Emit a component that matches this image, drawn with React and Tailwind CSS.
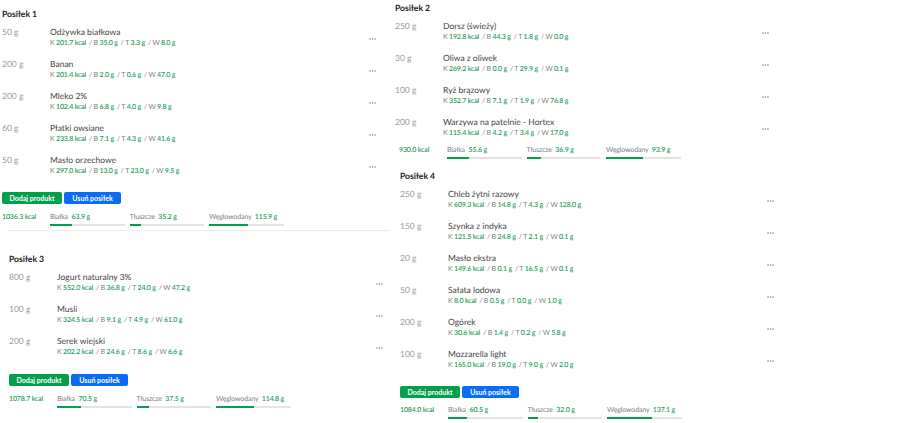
import React from 'react';

const meals = {
  one: {
    title: 'Posiłek 1',
    items: [
      ['50 g', 'Odżywka białkowa', '201.7', '35.0', '3.3', '8.0'],
      ['200 g', 'Banan', '201.4', '2.0', '0.6', '47.0'],
      ['200 g', 'Mleko 2%', '102.4', '6.8', '4.0', '9.8'],
      ['60 g', 'Płatki owsiane', '233.8', '7.1', '4.3', '41.6'],
      ['50 g', 'Masło orzechowe', '297.0', '13.0', '23.0', '9.5'],
    ],
    kcal: '1036.3',
    stats: [['Białka', '63.9', 30], ['Tłuszcze', '35.2', 16], ['Węglowodany', '115.9', 53]],
  },
  two: {
    title: 'Posiłek 2',
    items: [
      ['250 g', 'Dorsz (świeży)', '192.8', '44.3', '1.8', '0.0'],
      ['30 g', 'Oliwa z oliwek', '269.2', '0.0', '29.9', '0.1'],
      ['100 g', 'Ryż brązowy', '352.7', '7.1', '1.9', '76.8'],
      ['200 g', 'Warzywa na patelnie - Hortex', '115.4', '4.2', '3.4', '17.0'],
    ],
    kcal: '930.0',
    stats: [['Białka', '55.6', 30], ['Tłuszcze', '36.9', 19], ['Węglowodany', '93.9', 50]],
  },
  three: {
    title: 'Posiłek 3',
    items: [
      ['800 g', 'Jogurt naturalny 3%', '552.0', '36.8', '24.0', '47.2'],
      ['100 g', 'Musli', '324.5', '9.1', '4.9', '61.0'],
      ['200 g', 'Serek wiejski', '202.2', '24.6', '8.6', '6.6'],
    ],
    kcal: '1078.7',
    stats: [['Białka', '70.5', 32], ['Tłuszcze', '37.5', 17], ['Węglowodany', '114.8', 51]],
  },
  four: {
    title: 'Posiłek 4',
    items: [
      ['250 g', 'Chleb żytni razowy', '609.3', '14.8', '4.3', '128.0'],
      ['150 g', 'Szynka z indyka', '121.5', '24.8', '2.1', '0.1'],
      ['20 g', 'Masło ekstra', '149.6', '0.1', '16.5', '0.1'],
      ['50 g', 'Sałata lodowa', '8.0', '0.5', '0.0', '1.0'],
      ['200 g', 'Ogórek', '30.6', '1.4', '0.2', '5.8'],
      ['100 g', 'Mozzarella light', '165.0', '19.0', '9.0', '2.0'],
    ],
    kcal: '1084.0',
    stats: [['Białka', '60.5', 26], ['Tłuszcze', '32.0', 14], ['Węglowodany', '137.1', 60]],
  },
};

function Macro({ label, value, unit, first }) {
  return (
    <>
      <span className={first ? '' : 'ml-[3px]'}>{first ? label : `/ ${label}`} </span>
      <span className="font-semibold text-[#2a9d60]">{value} {unit}</span>
    </>
  );
}

function Item({ item }) {
  const [amount, name, k, b, t, w] = item;
  return (
    <div className="flex h-8 w-[374px] items-start">
      <div className="w-12 text-[8.5px] leading-3 text-[#999999]">{amount}</div>
      <div className="flex-1">
        <div className="text-[8.5px] leading-3 text-[#444444]">{name}</div>
        <div className="text-[7px] leading-[10px] tracking-[-0.18px] whitespace-nowrap text-[#808080]">
          <Macro label="K" value={k} unit="kcal" first />
          <Macro label="B" value={b} unit="g" />
          <Macro label="T" value={t} unit="g" />
          <Macro label="W" value={w} unit="g" />
        </div>
      </div>
      <svg width="7" height="2" viewBox="0 0 7 2" className="mt-3 fill-[#888888]">
        <circle cx="1" cy="1" r="0.8" />
        <circle cx="3.5" cy="1" r="0.8" />
        <circle cx="6" cy="1" r="0.8" />
      </svg>
    </div>
  );
}

function Stats({ meal, className }) {
  return (
    <div className={`flex items-start tracking-[-0.15px] whitespace-nowrap ${className}`}>
      <div className="w-12 text-[7px] leading-[11px] font-semibold text-[#2a9d60]">{meal.kcal} kcal</div>
      <div className="flex gap-[5px]">
        {meal.stats.map(([label, value, pct]) => (
          <div key={label} className="w-[74.5px]">
            <div className="text-[7px] leading-[11px] text-[#808080]">
              {label} <span className="ml-[2px] font-semibold text-[#2a9d60]">{value} g</span>
            </div>
            <div className="mt-px h-[2px] bg-[#e3e3e3]">
              <div className="h-full bg-[#03a04b]" style={{ width: `${pct}%` }} />
            </div>
          </div>
        ))}
      </div>
    </div>
  );
}

function Buttons({ className }) {
  return (
    <div className={`flex gap-[2px] text-[7px] font-bold text-white ${className}`}>
      <button className="h-3 w-[60px] rounded-[2px] bg-[#03a04b]">Dodaj produkt</button>
      <button className="h-3 w-[57px] rounded-[2px] bg-[#0a6cf5]">Usuń posiłek</button>
    </div>
  );
}

function Meal({ meal }) {
  return (
    <div>
      <h3 className="mb-[6px] text-[8.6px] leading-3 font-bold text-[#222222]">{meal.title}</h3>
      {meal.items.map((item) => (
        <Item key={item[1]} item={item} />
      ))}
    </div>
  );
}

export default function App() {
  return (
    <div className="flex h-[423px] w-[920px] overflow-hidden bg-white font-['Lato','Open_Sans',sans-serif] [text-rendering:geometricPrecision]">
      <div className="w-[393px] shrink-0">
        <section className="pt-2 pl-[2px]">
          <Meal meal={meals.one} />
          <Buttons className="mt-[6px]" />
          <Stats meal={meals.one} className="mt-2" />
        </section>
        <div className="mt-1 ml-2 h-px w-[382px] bg-[#ececec]" />
        <section className="pt-[22px] pl-[9px]">
          <Meal meal={meals.three} />
          <Buttons className="mt-[7px]" />
          <Stats meal={meals.three} className="mt-2" />
        </section>
      </div>
      <div className="flex-1">
        <section className="pt-[2px] pl-[2px]">
          <Meal meal={meals.two} />
          <Stats meal={meals.two} className="-mt-[3px] pl-1" />
        </section>
        <section className="pt-[11px] pl-[7px]">
          <Meal meal={meals.four} />
          <Buttons className="mt-[6px]" />
          <Stats meal={meals.four} className="mt-[7px]" />
        </section>
      </div>
    </div>
  );
}
